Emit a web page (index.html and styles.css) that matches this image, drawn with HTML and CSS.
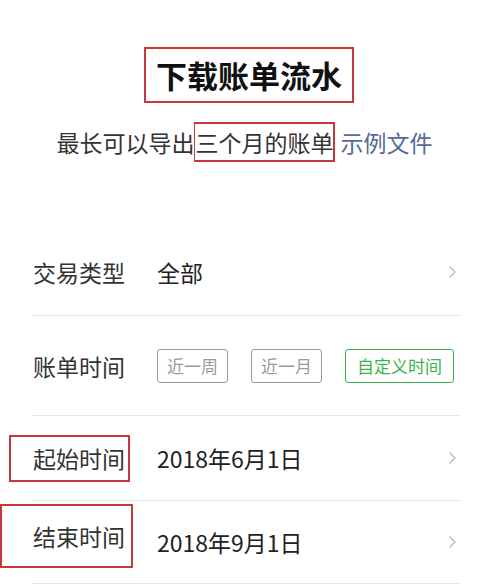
FILE: index.html
```html
<!DOCTYPE html>
<html lang="zh-CN">
<head>
    <meta charset="UTF-8">
    <meta name="viewport" content="width=device-width, initial-scale=1.0">
    <title>下载账单流水</title>
    <link rel="stylesheet" href="styles.css">
</head>
<body>
    <div class="header">
        <h2 class="title">下载账单流水</h2>
        <p class="subtitle">最长可以导出<span class="mark">三个月的账单</span> <a class="link" href="#">示例文件</a></p>
    </div>

    <div class="list">
        <div class="row row-type">
            <span class="label">交易类型</span>
            <span class="value">全部</span>
            <svg class="arrow" width="9" height="14" viewBox="0 0 9 14"><polyline points="1.5,1.5 7,7 1.5,12.5" fill="none" stroke="#c4c4c4" stroke-width="1.6"/></svg>
        </div>
        <div class="row row-range">
            <span class="label">账单时间</span>
            <div class="chips">
                <button class="chip">近一周</button>
                <button class="chip">近一月</button>
                <button class="chip chip-active">自定义时间</button>
            </div>
        </div>
        <div class="row row-start">
            <span class="label label-mark-a">起始时间</span>
            <span class="value">2018年6月1日</span>
            <svg class="arrow" width="9" height="14" viewBox="0 0 9 14"><polyline points="1.5,1.5 7,7 1.5,12.5" fill="none" stroke="#c4c4c4" stroke-width="1.6"/></svg>
        </div>
        <div class="row row-end">
            <span class="label label-mark-b">结束时间</span>
            <span class="value">2018年9月1日</span>
            <svg class="arrow" width="9" height="14" viewBox="0 0 9 14"><polyline points="1.5,1.5 7,7 1.5,12.5" fill="none" stroke="#c4c4c4" stroke-width="1.6"/></svg>
        </div>
    </div>
</body>
</html>
```

FILE: styles.css
```css
body {
    margin: 0;
    padding: 0;
    background: #fff;
    color: #222;
    font-family: "Noto Sans CJK SC", "Noto Sans", sans-serif;
}

.header {
    padding-top: 47px;
    text-align: center;
}

.title {
    display: inline-block;
    margin: 0 0 0 14px;
    padding: 0 10px;
    border: 2px solid #c8373a;
    font-size: 31px;
    line-height: 52px;
    font-weight: bold;
    color: #111;
}

.subtitle {
    margin: 19px 0 0;
    padding-left: 5px;
    font-size: 23px;
    line-height: 40px;
    color: #333;
}

.mark {
    display: inline-block;
    border: 2px solid #c8373a;
    border-left-width: 1px;
    line-height: 36px;
    vertical-align: top;
}

.link {
    color: #576b95;
    text-decoration: none;
}

.list {
    margin: 66px 24px 0 32px;
}

.row {
    display: flex;
    align-items: center;
    box-sizing: border-box;
    border-bottom: 1px solid #e6e6e6;
    font-size: 23px;
    color: #333;
}

.row-type { height: 88px; }
.row-range { height: 100px; }
.row-start { height: 85px; }
.row-end { height: 83px; }

.label {
    width: 92px;
    margin-left: 1px;
    margin-right: 32px;
    white-space: nowrap;
}

.label-mark-a {
    margin-left: -23px;
    margin-right: 27px;
    padding: 0 3px 0 22px;
    border: 2px solid #c8373a;
    line-height: 43px;
}

.label-mark-b {
    margin-left: -32px;
    margin-right: 24px;
    margin-bottom: 12px;
    padding: 0 6px 0 31px;
    border: 2px solid #c8373a;
    line-height: 60px;
}

.value {
    color: #222;
}

.arrow {
    margin-left: auto;
    margin-right: 3px;
}

.chips {
    display: flex;
    gap: 23px;
}

.chip {
    height: 34px;
    padding: 0 9px;
    border: 1px solid #9a9a9a;
    border-radius: 3px;
    background: #fff;
    color: #9a9a9a;
    font-family: inherit;
    font-size: 17px;
}

.chip-active {
    padding: 0 11px;
    border-color: #3cb44b;
    color: #3cb44b;
}
```
